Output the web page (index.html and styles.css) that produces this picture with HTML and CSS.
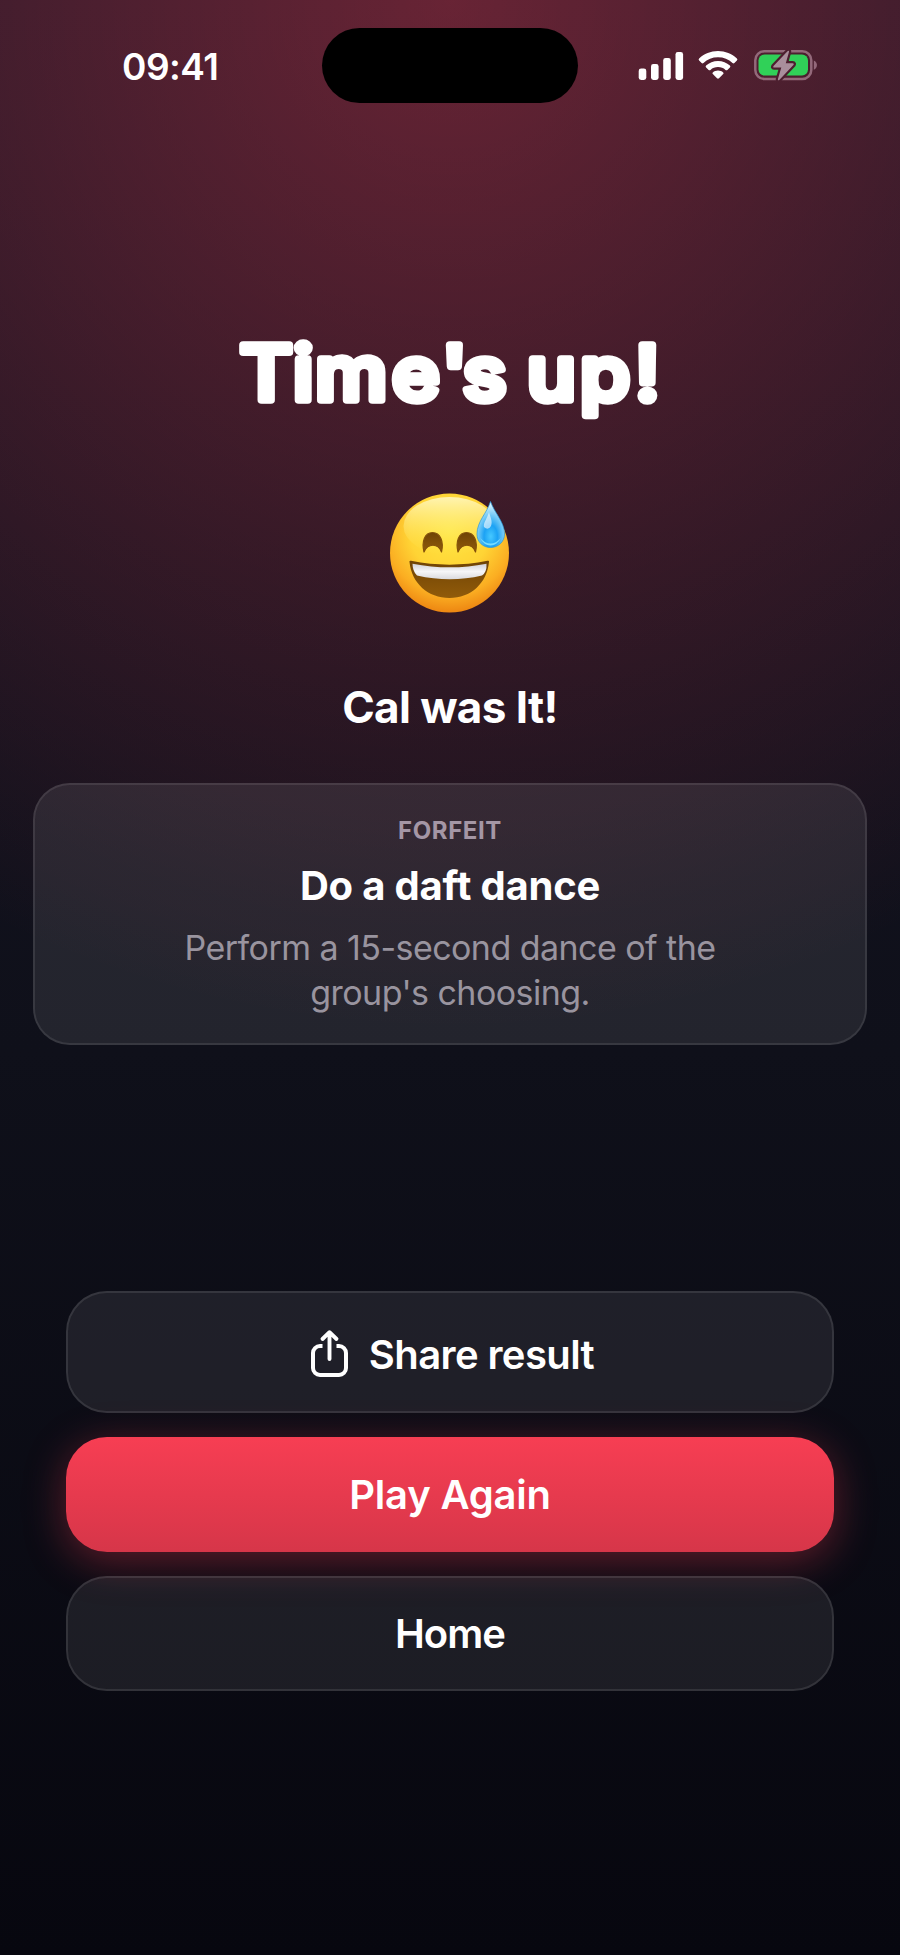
FILE: index.html
```html
<!DOCTYPE html>
<html lang="en">
<head>
<meta charset="utf-8">
<title>Time's up!</title>
<link rel="stylesheet" href="styles.css">
</head>
<body>
<div class="screen">
  <header class="status">
    <div class="clock"><span>09:41</span></div>
    <div class="island"></div>
    <div class="indicators">
      <svg class="signal" width="46" height="30" viewBox="0 0 46 30" fill="#fff">
        <rect x="0.7" y="17.5" width="7.6" height="11.5" rx="2.4"/>
        <rect x="13" y="13" width="7.6" height="16" rx="2.4"/>
        <rect x="25.2" y="7" width="7.6" height="22" rx="2.4"/>
        <rect x="37.5" y="1" width="7.6" height="28" rx="2.4"/>
      </svg>
      <svg class="wifi" width="40" height="30" viewBox="0 0 40 30" fill="#fff">
        <path d="M20 1C12.700 1 6.100 3.800 1.100 8.500Q0.100 9.500 1.100 10.500L3.600 13Q4.500 13.800 5.500 12.900C9.300 9.300 14.400 7.300 20 7.300S30.700 9.300 34.500 12.900Q35.500 13.800 36.400 13L38.900 10.500Q39.900 9.500 38.900 8.500C33.900 3.800 27.300 1 20 1Z"/>
        <path d="M20 10.900C15.400 10.900 11.200 12.700 8.100 15.500Q7.100 16.500 8.100 17.500L10.600 19.900Q11.500 20.700 12.500 19.900C14.500 18.100 17.100 17.100 20 17.100S25.500 18.100 27.500 19.900Q28.500 20.700 29.400 19.900L31.900 17.500Q32.900 16.500 31.900 15.500C28.800 12.700 24.600 10.900 20 10.900Z"/>
        <path d="M20 20.600C18 20.600 16.200 21.300 14.800 22.500Q14 23.300 14.800 24.100L19 28.200Q20 29.100 21 28.200L25.200 24.100Q26 23.300 25.200 22.500C23.800 21.300 22 20.600 20 20.600Z"/>
      </svg>
      <svg class="battery" width="66" height="34" viewBox="0 0 66 34">
        <defs>
          <mask id="bolt-gap">
            <rect width="66" height="34" fill="#fff"/>
            <path d="M34.500 3.200L20.500 18Q19.500 19.500 21 19.500H28.300L25 30.800C24.600 32.300 25.500 32.800 26.500 31.700L40.400 17.100Q41.500 15.300 39.700 15.300H32.800L35.900 4.300C36.400 2.500 35.400 2.200 34.500 3.200Z" fill="#000" stroke="#000" stroke-width="4.400" stroke-linejoin="round"/>
          </mask>
        </defs>
        <g mask="url(#bolt-gap)">
          <rect x="2.300" y="3.300" width="56" height="27.600" rx="9" fill="none" stroke="#93697a" stroke-width="2.500"/>
          <rect x="5.500" y="6.600" width="49.500" height="21" rx="6" fill="#30d158"/>
        </g>
        <path d="M60.800 12.500C65 14.200 65 20 60.800 21.700Z" fill="#93697a"/>
        <path d="M34.500 3.200L20.500 18Q19.500 19.500 21 19.500H28.300L25 30.800C24.600 32.300 25.500 32.800 26.500 31.700L40.400 17.100Q41.500 15.300 39.700 15.300H32.800L35.900 4.300C36.400 2.500 35.400 2.200 34.500 3.200Z" fill="#a98e9c"/>
      </svg>
    </div>
  </header>

  <main class="result">
    <h1 class="title">
      <svg width="500" height="130" viewBox="-30 -10 500 130">
        <text class="title-text" transform="scale(1.08 1)" y="70" x="9 58.300 79 150 196 215.500 250 275 324 375">Time's up!</text>
      </svg>
    </h1>
    <svg class="face" width="120" height="120" viewBox="0 0 120 120" role="img" aria-label="Grinning face with sweat">
      <defs>
        <radialGradient id="skin" cx="50%" cy="32%" r="67%">
          <stop offset="0" stop-color="#ffe642"/><stop offset=".5" stop-color="#ffd435"/><stop offset=".8" stop-color="#fbae22"/><stop offset="1" stop-color="#ee8913"/>
        </radialGradient>
        <linearGradient id="shine" x1="0" y1="0" x2="0" y2="1">
          <stop offset="0" stop-color="#fffbd0"/><stop offset="1" stop-color="#ffea50" stop-opacity="0"/>
        </linearGradient>
        <linearGradient id="teeth" x1="0" y1="0" x2="0" y2="1">
          <stop offset="0" stop-color="#d2d2d7"/><stop offset=".5" stop-color="#f6f6f8"/><stop offset="1" stop-color="#dadade"/>
        </linearGradient>
        <linearGradient id="brown" x1="0" y1="0" x2="0" y2="1">
          <stop offset="0" stop-color="#6f4305"/><stop offset="1" stop-color="#915b0a"/>
        </linearGradient>
        <radialGradient id="drop" cx="50%" cy="76%" r="70%">
          <stop offset="0" stop-color="#46c8ff"/><stop offset=".35" stop-color="#1ca2f4"/><stop offset=".6" stop-color="#61c2f6"/><stop offset="1" stop-color="#d8f4ff"/>
        </radialGradient>
      </defs>
      <circle cx="59.500" cy="60" r="59.500" fill="url(#skin)"/>
      <ellipse cx="59.500" cy="33" rx="46" ry="29" fill="url(#shine)" opacity=".8"/>
      <path d="M34 59C31.500 49 34.500 39.500 42.500 39.500S54 49 51.500 59C48 50 38 50 34 59Z" fill="url(#brown)" stroke="#83510b" stroke-width="1.200" stroke-linejoin="round"/>
      <path d="M68 59C65.500 49 68.500 39.500 76.500 39.500S88 49 85.500 59C82 50 72 50 68 59Z" fill="url(#brown)" stroke="#83510b" stroke-width="1.200" stroke-linejoin="round"/>
      <path d="M19.500 69Q19 67.500 21 67.800Q59.500 75.500 97.500 67.800Q99.500 67.500 99 69C97 90 81 105 59.500 105S21.500 90 19.500 69Z" fill="url(#brown)"/>
      <path d="M22.500 70.700Q60 78 96.500 70.700Q97 79 92 82.500Q60 90 27 82.500Q22.500 78 22.500 70.700Z" fill="url(#teeth)"/>
      <path d="M100.500 8.500C97 20 87 28.500 87 41C87 49 93 54.500 100.500 54.500S114.500 49 114.500 41C114.500 29 104.500 20 100.500 8.500Z" fill="url(#drop)" stroke="#2595d5" stroke-width=".7"/>
      <path d="M99 19C97 26 93 30 94 34Q98 38 101 33C103 28 100 24 99 19Z" fill="#fff" opacity=".6"/>
      <path d="M90 45Q100.500 56 111 45Q107 52.500 100.500 52.500T90 45Z" fill="#7fe2ff" opacity=".9"/>
    </svg>
    <h2 class="who"><span>Cal was It!</span></h2>
    <section class="forfeit">
      <div class="label"><span>FORFEIT</span></div>
      <div class="dare"><span>Do a daft dance</span></div>
      <p class="detail"><span>Perform a 15-second dance of the</span><br><span>group's choosing.</span></p>
    </section>
  </main>

  <nav class="actions">
    <button class="btn share">
      <svg width="40" height="50" viewBox="0 0 40 50" fill="none" stroke="#fff" stroke-width="4" stroke-linecap="round" stroke-linejoin="round">
        <path d="M12.500 17H10A7 7 0 0 0 3 24V39A7 7 0 0 0 10 46H29A7 7 0 0 0 36 39V24A7 7 0 0 0 29 17H26.500" stroke-linecap="butt"/>
        <path d="M19.500 30V4M12.500 10L19.500 3.200L26.500 10" stroke-width="3.900"/>
      </svg>
      <span>Share result</span>
    </button>
    <button class="btn play"><span>Play Again</span></button>
    <button class="btn home"><span>Home</span></button>
  </nav>
</div>
</body>
</html>
```
FILE: styles.css
```css
* { box-sizing: border-box; }
body {
  margin: 0;
  background: #07070f;
  font-family: Inter, "Liberation Sans", sans-serif;
  color: #fff;
}
.screen {
  width: 900px;
  height: 1955px;
  overflow: hidden;
  display: flex;
  flex-direction: column;
  background:
    radial-gradient(circle 1030px at 50% 0, rgba(255, 61, 82, .35), rgba(255, 61, 82, 0)),
    linear-gradient(#171625 0, #0f101a 1050px, #07070f 100%);
}
.status {
  height: 103px;
  padding-top: 28px;
  display: grid;
  grid-template-columns: 322px 256px 322px;
}
.clock {
  padding-left: 122px;
  font-size: 37px;
  line-height: 77px;
  font-weight: 580;
  letter-spacing: -.5px;
}
.island { height: 75px; border-radius: 38px; background: #000; }
.indicators { display: flex; padding-left: 60px; }
.signal { margin-top: 23px; }
.wifi { margin: 22px 0 0 14px; }
.battery { margin: 20px 0 0 15px; }
.result {
  display: flex;
  flex-direction: column;
  align-items: center;
}
.title { margin: 217px 0 0; height: 130px; }
.title svg { display: block; overflow: visible; }
.title-text {
  font: 500 75px Inter, sans-serif;
  fill: #fff;
  stroke: #fff;
  stroke-width: 7.6px;
  stroke-linejoin: round;
  stroke-linecap: round;
}
.face { display: block; margin-top: 43px; }
.who {
  margin: 64px 0 0;
  font-size: 44px;
  line-height: 60px;
  font-weight: 650;
  letter-spacing: -.6px;
}
.forfeit {
  width: 834px;
  height: 262px;
  margin-top: 46px;
  padding-top: 29px;
  border: 2px solid rgba(255, 255, 255, .17);
  border-radius: 37px;
  background: rgba(255, 255, 255, .085);
  background-clip: padding-box;
  text-align: center;
}
.label {
  font-size: 24px;
  line-height: 34px;
  font-weight: 650;
  letter-spacing: .6px;
  color: #a496a5;
}
.dare {
  margin-top: 13px;
  font-size: 40px;
  line-height: 50px;
  font-weight: 650;
  letter-spacing: -.2px;
}
.detail {
  margin: 14px 0 0;
  font-size: 34px;
  line-height: 45px;
  letter-spacing: -.55px;
  color: #99949f;
}
.actions {
  display: flex;
  flex-direction: column;
  gap: 24px;
  width: 768px;
  margin: 246px auto 0;
}
.btn {
  height: 115px;
  padding: 0;
  display: flex;
  align-items: center;
  justify-content: center;
  gap: 19px;
  border: 2px solid rgba(255, 255, 255, .17);
  border-radius: 41px;
  background: rgba(255, 255, 255, .08);
  background-clip: padding-box;
  color: #fff;
  font: 600 40px Inter, sans-serif;
  letter-spacing: -.6px;
}
.share { height: 122px; padding: 3px 0 0 4px; }
.share span { padding-top: 2px; }
.home { letter-spacing: -.9px; }
.play {
  border: 0;
  letter-spacing: -.2px;
  background: linear-gradient(#f73e53, #d63649);
  box-shadow: 0 9px 42px rgba(255, 61, 82, .35);
}
```
